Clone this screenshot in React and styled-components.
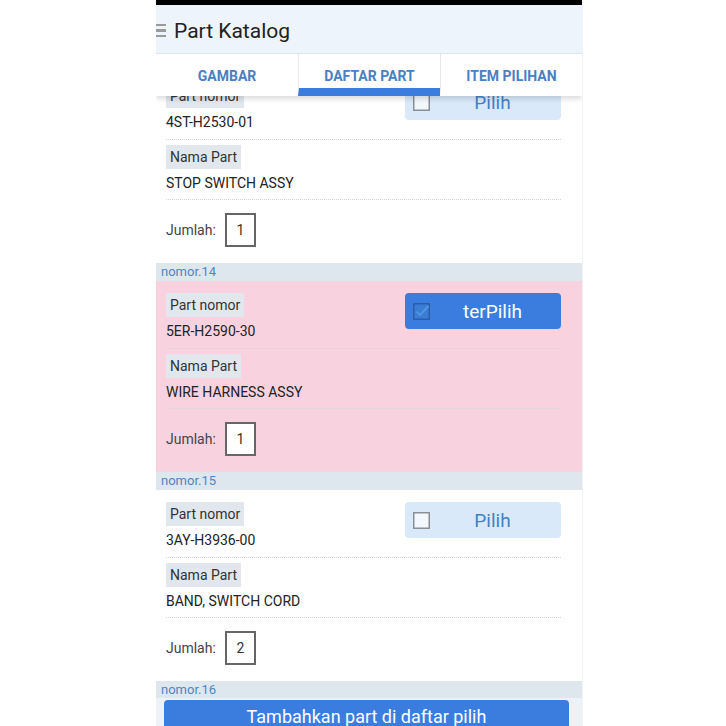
import React from "react";
import styled, { createGlobalStyle } from "styled-components";

const Global = createGlobalStyle`
  html, body { margin: 0; padding: 0; background: #ffffff; overflow: hidden; height: 726px; }
  body { font-family: Roboto, "Noto Sans", Arial, sans-serif; }
  * { box-sizing: border-box; }
`;

const Page = styled.div`
  display: flex;
  padding-left: 156px;
  height: 726px;
  overflow: hidden;
`;

const Phone = styled.div`
  width: 427px;
  height: 760px;
  display: flex;
  flex-direction: column;
  border-right: 1px solid #f0f2f5;
  background: #ffffff;
`;

const StatusBar = styled.div`
  height: 5px;
  background: #000;
  flex: none;
`;

const Header = styled.header`
  height: 49px;
  flex: none;
  background: #eef4fb;
  border-bottom: 1px solid #dfe5ec;
  display: flex;
  align-items: center;
  gap: 8px;
  padding-top: 3px;
`;

const Burger = styled.span`
  display: flex;
  flex-direction: column;
  gap: 3px;
  width: 10px;
  span {
    display: block;
    height: 2.5px;
    background: #9a9a9a;
  }
`;

const Title = styled.h1`
  margin: 0;
  font-size: 21px;
  font-weight: 400;
  color: #222;
`;

const Body = styled.div`
  flex: 1;
  min-height: 0;
  overflow: hidden;
  display: flex;
  flex-direction: column;
`;

const Tabs = styled.nav`
  position: relative;
  z-index: 2;
  flex: none;
  height: 42px;
  background: #fff;
  display: grid;
  grid-template-columns: repeat(3, 1fr);
  box-shadow: 0 3px 5px rgba(0, 0, 0, 0.14);
`;

const Tab = styled.div`
  display: flex;
  align-items: center;
  justify-content: center;
  font-size: 14px;
  font-weight: 700;
  color: #4a80c2;
  border-left: ${(p) => (p.$first ? "none" : "1px solid #e8e8e8")};
  border-bottom: 8px solid ${(p) => (p.$active ? "#3b7ddf" : "transparent")};
  padding-top: 10px;
`;

const List = styled.div`
  margin-top: -42px;
  display: flex;
  flex-direction: column;
`;

const GroupHead = styled.div`
  height: 18px;
  background: #dee6ee;
  color: #4b87c6;
  font-size: 13px;
  line-height: 18px;
  padding-left: 5px;
`;

const Card = styled.div`
  background: ${(p) => (p.$selected ? "#f8d3df" : "#ffffff")};
  padding: 12px 21px 16px 10px;
  display: flex;
  flex-direction: column;
`;

const TopRow = styled.div`
  display: flex;
  justify-content: space-between;
  align-items: flex-start;
`;

const Field = styled.div`
  display: flex;
  flex-direction: column;
  align-items: flex-start;
  padding-bottom: ${(p) => p.$pb}px;
`;

const Label = styled.span`
  display: inline-block;
  height: 24px;
  line-height: 24px;
  padding: 0 4px;
  background: #e2e7ed;
  color: #333;
  font-size: 14px;
  margin-bottom: 4px;
`;

const Value = styled.div`
  line-height: 20px;
  font-size: 14px;
  color: #222;
`;

const Divider = styled.div`
  border-top: 1px dotted #d2d6db;
  margin-bottom: ${(p) => p.$mb}px;
`;

const QtyRow = styled.div`
  display: flex;
  align-items: center;
  gap: 9px;
  font-size: 14px;
  color: #444;
`;

const QtyBox = styled.div`
  width: 31px;
  height: 34px;
  border: 2px solid #666;
  background: #fff;
  display: flex;
  align-items: center;
  justify-content: center;
  font-size: 14px;
  color: #333;
`;

const PickButton = styled.div`
  width: 156px;
  height: 36px;
  border-radius: 4px;
  background: ${(p) => (p.$selected ? "#3b7ddf" : "#d9e9fa")};
  display: flex;
  align-items: center;
  padding: 0 6px 0 8px;
`;

const PickText = styled.span`
  flex: 1;
  text-align: center;
  font-size: 19px;
  color: ${(p) => (p.$selected ? "#ffffff" : "#4182c6")};
`;

const Footer = styled.footer`
  flex: none;
  height: 62px;
  background: #eef2f6;
  padding: 2px 13px 0 8px;
`;

const BigButton = styled.div`
  height: 44px;
  border-radius: 4px;
  background: #3b7ddf;
  color: #fff;
  font-size: 18px;
  text-align: center;
  padding-top: 6px;
  line-height: 22px;
`;

const Check = ({ checked }) =>
  checked ? (
    <svg width="17" height="17" viewBox="0 0 17 17">
      <rect x="0.75" y="0.75" width="15.5" height="15.5" fill="#3a7cd8" stroke="#2a5ea8" strokeWidth="1.5" />
      <path d="M3.5 8.5 L7 12 L15.5 3" fill="none" stroke="#4d95dc" strokeWidth="2.2" />
    </svg>
  ) : (
    <svg width="17" height="17" viewBox="0 0 17 17">
      <rect x="0.75" y="0.75" width="15.5" height="15.5" fill="#f3f8fd" stroke="#8a8f95" strokeWidth="1.5" />
    </svg>
  );

const items = [
  { no: 13, part: "4ST-H2530-01", name: "STOP SWITCH ASSY", qty: 1, selected: false },
  { no: 14, part: "5ER-H2590-30", name: "WIRE HARNESS ASSY", qty: 1, selected: true },
  { no: 15, part: "3AY-H3936-00", name: "BAND, SWITCH CORD", qty: 2, selected: false },
];

export default function App() {
  return (
    <>
      <Global />
      <Page>
        <Phone>
          <StatusBar />
          <Header>
            <Burger>
              <span />
              <span />
              <span />
            </Burger>
            <Title>Part Katalog</Title>
          </Header>
          <Body>
            <Tabs>
              <Tab $first>GAMBAR</Tab>
              <Tab $active>DAFTAR PART</Tab>
              <Tab>ITEM PILIHAN</Tab>
            </Tabs>
            <List>
              {items.map((it) => (
                <React.Fragment key={it.no}>
                  <GroupHead>nomor.{it.no}</GroupHead>
                  <Card $selected={it.selected}>
                    <TopRow>
                      <Field $pb={7}>
                        <Label>Part nomor</Label>
                        <Value>{it.part}</Value>
                      </Field>
                      <PickButton $selected={it.selected}>
                        <Check checked={it.selected} />
                        <PickText $selected={it.selected}>{it.selected ? "terPilih" : "Pilih"}</PickText>
                      </PickButton>
                    </TopRow>
                    <Divider $mb={5} />
                    <Field $pb={6}>
                      <Label>Nama Part</Label>
                      <Value>{it.name}</Value>
                    </Field>
                    <Divider $mb={13} />
                    <QtyRow>
                      Jumlah:
                      <QtyBox>{it.qty}</QtyBox>
                    </QtyRow>
                  </Card>
                </React.Fragment>
              ))}
              <GroupHead>nomor.16</GroupHead>
            </List>
          </Body>
          <Footer>
            <BigButton>Tambahkan part di daftar pilih</BigButton>
          </Footer>
        </Phone>
      </Page>
    </>
  );
}
